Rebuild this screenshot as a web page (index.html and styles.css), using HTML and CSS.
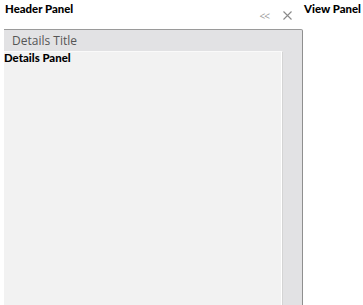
FILE: index.html
```html
<!DOCTYPE html>
<html lang="en">
<head>
    <meta charset="UTF-8">
    <title>Panels</title>
    <link rel="stylesheet" href="styles.css">
</head>
<body>
    <div class="layout">
        <div class="header-panel">
            <div class="panel-label">Header Panel</div>
            <div class="tools">
                <span class="tool collapse">&lt;&lt;</span>
                <span class="tool close">
                    <svg width="9" height="9" viewBox="0 0 9 9"><path d="M0.5 0.5 L8.5 8.5 M8.5 0.5 L0.5 8.5" stroke="#8a8a8a" stroke-width="1.1" fill="none"/></svg>
                </span>
            </div>
            <div class="details">
                <div class="details-title">Details Title</div>
                <div class="details-body">
                    <div class="details-panel">
                        <div class="panel-label">Details Panel</div>
                    </div>
                    <div class="gutter"></div>
                </div>
            </div>
        </div>
        <div class="view-panel">
            <div class="panel-label">View Panel</div>
        </div>
    </div>
</body>
</html>
```

FILE: styles.css
```css
html, body {
    margin: 0;
    height: 100%;
    background: #fff;
}

body {
    font-family: "Open Sans", "DejaVu Sans", sans-serif;
    overflow: hidden;
}

.layout {
    display: flex;
    height: 100%;
}

.panel-label {
    font-family: Lato, "Open Sans", sans-serif;
    font-size: 11.4px;
    font-weight: 900;
    color: #000;
    line-height: 14px;
    white-space: nowrap;
}

.header-panel {
    flex: 0 0 299px;
    padding-left: 4px;
    display: flex;
    flex-direction: column;
}

.header-panel > .panel-label {
    padding: 2px 0 0 1px;
    height: 6px;
}

.tools {
    display: flex;
    justify-content: flex-end;
    align-items: center;
    gap: 14px;
    height: 15px;
    padding-right: 11px;
    margin-bottom: 6px;
    color: #9a9a9a;
}

.tool.collapse {
    font-size: 10px;
    letter-spacing: -1px;
}

.tool.close svg {
    display: block;
}

.details {
    flex: 1;
    display: flex;
    flex-direction: column;
    background: #e2e2e4;
    border-top: 1px solid #9a9a9a;
    border-right: 1px solid #8f8f8f;
    border-top-right-radius: 2px;
}

.details-title {
    height: 21px;
    line-height: 21px;
    padding-left: 8px;
    font-size: 12px;
    color: #555;
}

.details-body {
    flex: 1;
    display: flex;
}

.details-panel {
    width: 278px;
    background: #f2f2f2;
    border-top: 1px solid #fafafa;
    border-right: 1px solid #d4d4d4;
    box-shadow: inset -1px 0 0 #fff;
}

.details-panel .panel-label {
    margin-top: -1px;
}

.gutter {
    flex: 1;
}

.view-panel {
    padding-left: 1px;
    padding-top: 2px;
}
```
